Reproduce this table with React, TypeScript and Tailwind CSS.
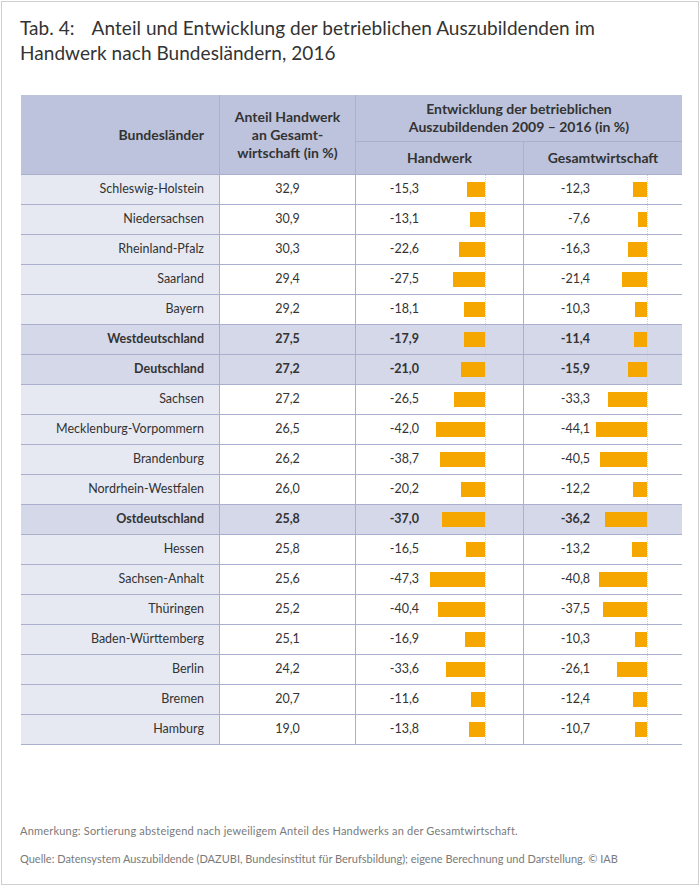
const rows: { name: string; share: string; hw: number; gw: number; hl?: boolean }[] = [
  { name: "Schleswig-Holstein", share: "32,9", hw: -15.3, gw: -12.3 },
  { name: "Niedersachsen", share: "30,9", hw: -13.1, gw: -7.6 },
  { name: "Rheinland-Pfalz", share: "30,3", hw: -22.6, gw: -16.3 },
  { name: "Saarland", share: "29,4", hw: -27.5, gw: -21.4 },
  { name: "Bayern", share: "29,2", hw: -18.1, gw: -10.3 },
  { name: "Westdeutschland", share: "27,5", hw: -17.9, gw: -11.4, hl: true },
  { name: "Deutschland", share: "27,2", hw: -21.0, gw: -15.9, hl: true },
  { name: "Sachsen", share: "27,2", hw: -26.5, gw: -33.3 },
  { name: "Mecklenburg-Vorpommern", share: "26,5", hw: -42.0, gw: -44.1 },
  { name: "Brandenburg", share: "26,2", hw: -38.7, gw: -40.5 },
  { name: "Nordrhein-Westfalen", share: "26,0", hw: -20.2, gw: -12.2 },
  { name: "Ostdeutschland", share: "25,8", hw: -37.0, gw: -36.2, hl: true },
  { name: "Hessen", share: "25,8", hw: -16.5, gw: -13.2 },
  { name: "Sachsen-Anhalt", share: "25,6", hw: -47.3, gw: -40.8 },
  { name: "Thüringen", share: "25,2", hw: -40.4, gw: -37.5 },
  { name: "Baden-Württemberg", share: "25,1", hw: -16.9, gw: -10.3 },
  { name: "Berlin", share: "24,2", hw: -33.6, gw: -26.1 },
  { name: "Bremen", share: "20,7", hw: -11.6, gw: -12.4 },
  { name: "Hamburg", share: "19,0", hw: -13.8, gw: -10.7 },
];

const fmt = (v: number) => v.toFixed(1).replace(".", ",");

// value text + bar growing left from the dotted zero line
function BarCell({ value, textW, tail, last }: { value: number; textW: string; tail: string; last?: boolean }) {
  return (
    <div className={`flex h-full items-center ${last ? "" : "border-r border-[#a9afcd]"}`}>
      <span className={`${textW} text-right`}>{fmt(value)}</span>
      <div className="flex h-full flex-1 items-center justify-end border-r border-dotted border-[#cfcfcf]">
        <div className="h-[15px] bg-[#f5a700]" style={{ width: Math.round(Math.abs(value) * 1.165) }} />
      </div>
      <div className={tail} />
    </div>
  );
}

export default function App() {
  return (
    <div className="h-[886px] w-[700px] bg-white p-px font-['Lato',sans-serif] text-[#333]">
      <div className="flex h-full flex-col border border-[#cfcfcf] px-[18px]">
        <h1 className="mt-[13px] text-[19px] font-normal leading-[25px] tracking-[0.05px] text-[#333]">
          <span className="mr-[17px]">Tab. 4:</span>Anteil und Entwicklung der betrieblichen Auszubildenden im
          <br />
          Handwerk nach Bundesländern, 2016
        </h1>

        <div className="mt-[30px] ml-px w-[661px] text-[12.5px]">
          {/* header */}
          <div className="grid grid-cols-[199px_136px_168px_158px] grid-rows-[47px_32px] border-b border-[#a9afcd] bg-[#bdc3dc] text-[14px] font-bold leading-[18px]">
            <div className="row-span-2 flex items-center justify-end border-r border-[#a9afcd] pr-[15px]">Bundesländer</div>
            <div className="row-span-2 flex items-center justify-center border-r border-[#a9afcd] text-center">
              Anteil Handwerk
              <br />
              an Gesamt-
              <br />
              wirtschaft (in %)
            </div>
            <div className="col-span-2 flex items-center justify-center border-b border-[#a9afcd] text-center">
              Entwicklung der betrieblichen
              <br />
              Auszubildenden 2009 – 2016 (in %)
            </div>
            <div className="flex items-center justify-center border-r border-[#a9afcd]">Handwerk</div>
            <div className="flex items-center justify-center">Gesamtwirtschaft</div>
          </div>

          {rows.map((r) => (
            <div
              key={r.name}
              className={`grid h-[30px] grid-cols-[199px_136px_168px_158px] items-center border-b border-[#a9afcd] ${
                r.hl ? "bg-[#d4d8e8] font-bold" : "bg-white"
              }`}
            >
              <div className={`flex h-full items-center justify-end border-r border-[#a9afcd] pr-[15px] ${r.hl ? "" : "bg-[#e6e9f2]"}`}>
                {r.name}
              </div>
              <div className="flex h-full items-center justify-center border-r border-[#a9afcd]">{r.share}</div>
              <BarCell value={r.hw} textW="w-[63px]" tail="w-[37px]" />
              <BarCell value={r.gw} textW="w-[66px]" tail="w-[34px]" last />
            </div>
          ))}
        </div>

        <div className="mt-auto pb-[11px] text-[11px] leading-[28px] text-[#7a7a7a]">
          <p className="tracking-[0.2px]">Anmerkung: Sortierung absteigend nach jeweiligem Anteil des Handwerks an der Gesamtwirtschaft.</p>
          <p>Quelle: Datensystem Auszubildende (DAZUBI, Bundesinstitut für Berufsbildung); eigene Berechnung und Darstellung. © IAB</p>
        </div>
      </div>
    </div>
  );
}
